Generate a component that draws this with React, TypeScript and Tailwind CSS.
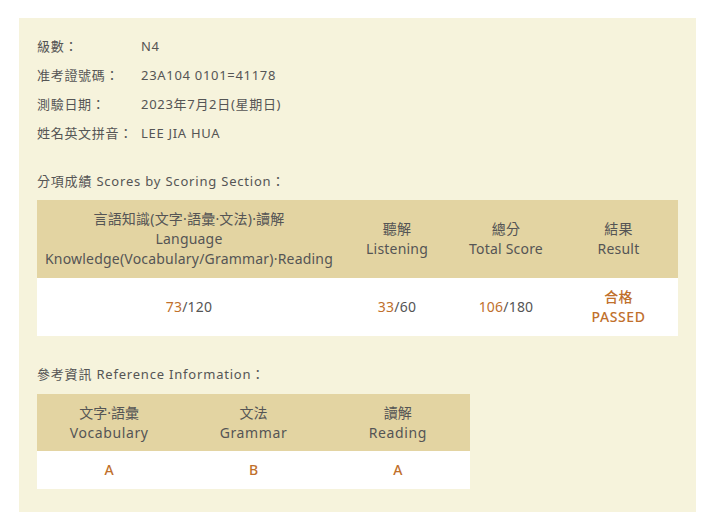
const font = {
  fontFamily: '"Noto Sans", "Noto Sans CJK TC", sans-serif',
};

const info = [
  { label: "級數：", value: "N4" },
  { label: "准考證號碼：", value: "23A104 0101=41178" },
  { label: "測驗日期：", value: "2023年7月2日(星期日)" },
  { label: "姓名英文拼音：", value: "LEE JIA HUA" },
];

const refs = [
  { zh: "文字·語彙", en: "Vocabulary", grade: "A" },
  { zh: "文法", en: "Grammar", grade: "B" },
  { zh: "讀解", en: "Reading", grade: "A" },
];

function Score({ got, total }: { got: number; total: number }) {
  return (
    <span>
      <span className="text-[#c0702c]">{got}</span>/{total}
    </span>
  );
}

export default function App() {
  return (
    <div className="h-[525px] w-[710px] bg-white pt-[18px] pl-[19px] text-[13px] text-[#555]" style={font}>
      <div className="w-[677px] bg-[#f6f3dc] px-[18px] pt-[14px] pb-[23px]">
        {info.map(row => (
          <div key={row.label} className="flex h-[29px] items-center tracking-[0.7px]">
            <span className="w-[104px]">{row.label}</span>
            <span>{row.value}</span>
          </div>
        ))}

        <p className="mt-[24px] mb-[8px] flex h-[20px] items-center tracking-[0.8px]">
          分項成績 Scores by Scoring Section：
        </p>

        <div className="w-[641px] text-center text-[14px] leading-[20px] tracking-[0.2px]">
          <div className="grid h-[78px] grid-cols-[304px_112px_106px_119px] items-center bg-[#e3d4a2]">
            <div>
              <div>言語知識(文字·語彙·文法)·讀解</div>
              <div>Language</div>
              <div>Knowledge(Vocabulary/Grammar)·Reading</div>
            </div>
            <div>
              <div>聽解</div>
              <div>Listening</div>
            </div>
            <div>
              <div>總分</div>
              <div>Total Score</div>
            </div>
            <div>
              <div>結果</div>
              <div>Result</div>
            </div>
          </div>
          <div className="grid h-[58px] grid-cols-[304px_112px_106px_119px] items-center bg-white">
            <div>
              <Score got={73} total={120} />
            </div>
            <div>
              <Score got={33} total={60} />
            </div>
            <div>
              <Score got={106} total={180} />
            </div>
            <div className="font-medium text-[#c0702c]">
              <div>合格</div>
              <div className="tracking-[0.6px]">PASSED</div>
            </div>
          </div>
        </div>

        <p className="mt-[29px] mb-[9px] flex h-[20px] items-center tracking-[0.8px]">
          參考資訊 Reference Information：
        </p>

        <div className="w-[433px] text-center text-[14px] leading-[20px]">
          <div className="grid h-[57px] grid-cols-3 items-center bg-[#e3d4a2]">
            {refs.map(r => (
              <div key={r.en}>
                <div>{r.zh}</div>
                <div className="tracking-[0.6px]">{r.en}</div>
              </div>
            ))}
          </div>
          <div className="grid h-[38px] grid-cols-3 items-center bg-white font-medium text-[#c0702c]">
            {refs.map(r => (
              <div key={r.en}>{r.grade}</div>
            ))}
          </div>
        </div>
      </div>
    </div>
  );
}
